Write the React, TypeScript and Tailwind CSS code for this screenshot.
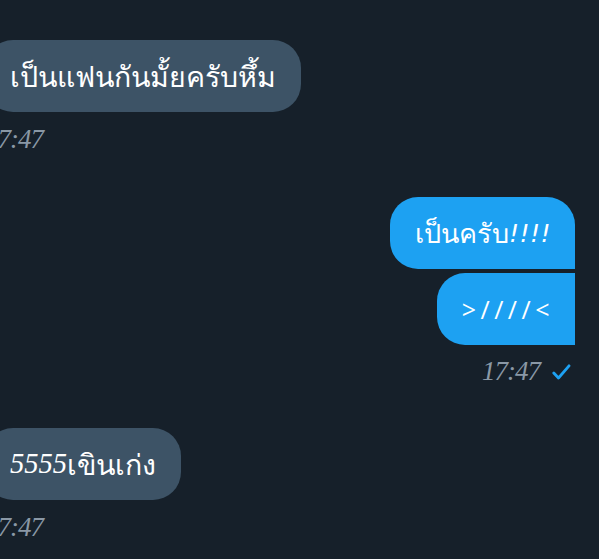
export default function App() {
  return (
    <div className="w-[599px] h-[559px] overflow-hidden bg-[#16202a] text-white">
      <div className="flex flex-col pt-[40px]">
        <div className="-ml-[15px] self-start">
          <div className="h-[72px] flex items-center px-[25px] rounded-[28px] bg-[#3d5366] text-[28.5px] leading-none font-['Noto_Sans',sans-serif]">
            เป็นแฟนกันมั้ยครับหึ้ม
          </div>
          <div className="mt-[14px] text-[#8a98a6] italic text-[27px] leading-none font-['Liberation_Serif',serif] tracking-[-1px]">
            17:47
          </div>
        </div>
        <div className="self-end mr-[24px] mt-[44px] flex flex-col items-end gap-[4px] font-['DejaVu_Sans',sans-serif]">
          <div className="h-[72px] flex items-center pl-[25px] pr-[24px] rounded-[28px] rounded-br-none bg-[#1da1f2] text-[27px] leading-none">
            เป็นครับ<span className="italic text-[25px] tracking-[0.5px]">!!!!</span>
          </div>
          <div className="h-[72px] flex items-center pl-[25px] pr-[21px] rounded-l-[28px] bg-[#1da1f2] text-[25px] leading-none tracking-[4.5px] font-['Open_Sans',sans-serif]">
            &gt;////&lt;
          </div>
          <div className="mt-[9px] flex items-center gap-[12px] pr-[4px]">
            <span className="text-[#8a98a6] italic text-[27px] leading-none font-['Liberation_Serif',serif] tracking-[-1px]">17:47</span>
            <svg width="19" height="16" viewBox="0 0 19 16" fill="none" stroke="#1da1f2" strokeWidth="2.8" strokeLinecap="round" strokeLinejoin="round">
              <path d="M1.8 9l4.7 5L17 1.8" />
            </svg>
          </div>
        </div>
        <div className="-ml-[15px] self-start mt-[43px]">
          <div className="h-[72px] flex items-center px-[25px] rounded-[28px] bg-[#3d5366] text-[28.5px] leading-none font-['Noto_Sans',sans-serif]">
            <span className="italic font-['Liberation_Serif',serif]">5555</span>เขินเก่ง
          </div>
          <div className="mt-[14px] text-[#8a98a6] italic text-[27px] leading-none font-['Liberation_Serif',serif] tracking-[-1px]">
            17:47
          </div>
        </div>
      </div>
    </div>
  );
}
